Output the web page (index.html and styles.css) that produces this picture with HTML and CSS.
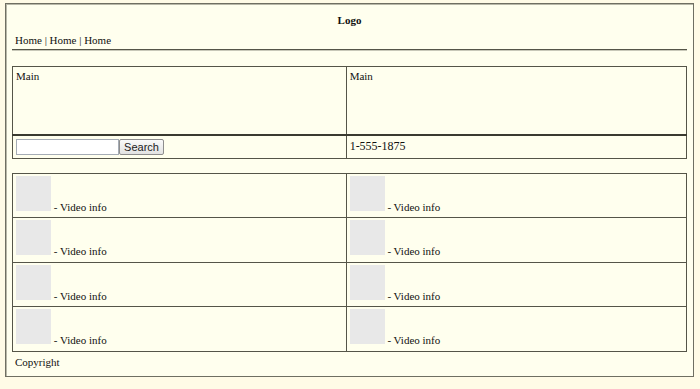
FILE: index.html
```html
<!DOCTYPE html>
<html>
<head>
<meta charset="utf-8">
<link rel="stylesheet" href="styles.css">
</head>
<body>
<div class="page">
  <div class="logo">Logo</div>
  <div class="nav">Home | Home | Home</div>
  <div class="rule"></div>
  <table class="main">
    <colgroup><col class="c1"><col class="c2"></colgroup>
    <tr class="top">
      <td>Main</td>
      <td>Main</td>
    </tr>
    <tr class="bottom">
      <td><input class="search" type="text"><button class="btn">Search</button></td>
      <td>1-555-1875</td>
    </tr>
  </table>
  <table class="videos">
    <colgroup><col class="c1"><col class="c2"></colgroup>
    <tr><td><span class="thumb"></span> - Video info</td><td><span class="thumb"></span> - Video info</td></tr>
    <tr><td><span class="thumb"></span> - Video info</td><td><span class="thumb"></span> - Video info</td></tr>
    <tr><td><span class="thumb"></span> - Video info</td><td><span class="thumb"></span> - Video info</td></tr>
    <tr><td><span class="thumb"></span> - Video info</td><td><span class="thumb"></span> - Video info</td></tr>
  </table>
  <div class="copy">Copyright</div>
</div>
</body>
</html>
```
FILE: styles.css
```css
html, body {
  margin: 0;
  background: #fffbe6;
}
body {
  padding: 3px 6px 0 5px;
  font-family: "Liberation Serif", "Times New Roman", serif;
  font-size: 11px;
  color: #111;
}
.page {
  background: #ffffee;
  border: 1px solid #6f6f62;
  box-shadow: inset 1px 1px 0 #b8b8a8;
  padding: 0 6px 6px 6px;
  height: 374px;
  box-sizing: border-box;
}
.logo {
  text-align: center;
  font-weight: bold;
  padding-top: 10px;
  height: 24px;
  box-sizing: border-box;
}
.nav {
  padding-left: 3px;
  height: 21px;
  line-height: 24px;
}
.rule {
  border-top: 1px solid #555548;
  border-bottom: 1px solid #c8c8b8;
  margin-bottom: 15px;
}
table {
  width: 100%;
  table-layout: fixed;
  border-collapse: collapse;
  border: 1px solid #555548;
}
.c1 {
  width: 49.5%;
}
td {
  border: 1px solid #555548;
  padding: 0 3px;
  vertical-align: top;
}
.main .top td {
  height: 68px;
  padding-top: 3px;
  box-sizing: border-box;
  border-bottom: 2px solid #3a3a30;
}
.main .bottom td {
  height: 22px;
  vertical-align: middle;
  font-size: 12px;
}
.search {
  width: 103px;
  height: 16px;
  box-sizing: border-box;
  border: 1px solid #a5acb5;
  background: #fff;
  margin: 0;
  vertical-align: middle;
  padding: 0;
}
.btn {
  height: 16px;
  width: 45px;
  margin: 0;
  padding: 0;
  font-family: "Liberation Sans", Arial, sans-serif;
  font-size: 11px;
  color: #222;
  border: 1px solid #8d8d8d;
  border-radius: 2px;
  background: linear-gradient(#fafafa, #e2e2e2);
  vertical-align: middle;
}
.videos {
  margin-top: 14px;
}
.videos td {
  height: 44.5px;
  padding: 2px 3px 0 3px;
  box-sizing: border-box;
  font-size: 11px;
  line-height: 13px;
}
.thumb {
  display: inline-block;
  width: 35px;
  height: 35px;
  background: #e8e8e8;
  vertical-align: baseline;
}
.copy {
  padding: 4px 3px 0;
}
```
